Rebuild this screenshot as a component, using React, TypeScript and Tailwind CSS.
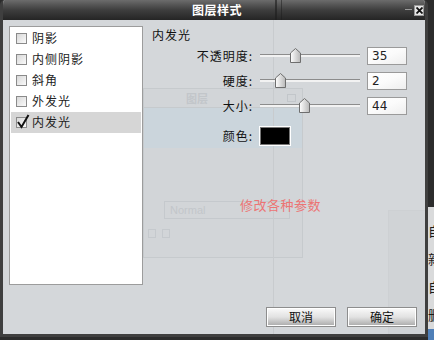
import React from 'react';

const cjk = { fontFamily: '"Noto Sans CJK SC", "Liberation Sans", sans-serif' };

const Checkbox = ({ checked }: { checked?: boolean }) => (
  <span className="relative w-[11px] h-[11px] border border-[#8a8a8a] bg-gradient-to-br from-[#d8d8d8] to-[#fafafa] shrink-0">
    {checked && (
      <svg className="absolute -left-[1px] -top-[4px]" width="14" height="15" viewBox="0 0 14 15">
        <path d="M2 8 L5.5 13 L12.5 1" fill="none" stroke="#111" strokeWidth="2" />
      </svg>
    )}
  </span>
);

const Thumb = () => (
  <svg width="11" height="15" viewBox="0 0 11 15">
    <defs>
      <linearGradient id="tg" x1="0" x2="1" y1="0" y2="0">
        <stop offset="0" stopColor="#ffffff" />
        <stop offset="1" stopColor="#b8b8b8" />
      </linearGradient>
    </defs>
    <path d="M5.5 0.5 L10.5 5 L10.5 14.5 L0.5 14.5 L0.5 5 Z" fill="url(#tg)" stroke="#6e6e6e" />
  </svg>
);

const SliderRow = ({ label, pos, value }: { label: string; pos: number; value: string }) => (
  <div className="flex items-center h-[17px]">
    <div className="w-[101px] text-right text-[12px] text-[#111] tracking-[1px]" style={cjk}>{label}</div>
    <div className="relative ml-[7px] w-[100px] h-[17px] flex items-center">
      <div className="w-full h-[3px] border-t border-[#8c8c8c] bg-[#f2f2f2]" />
      <div className="absolute top-[1px]" style={{ left: pos - 5 }}>
        <Thumb />
      </div>
    </div>
    <div
      className="ml-[7px] w-[40px] h-[18px] bg-gradient-to-br from-white via-[#fbfbfb] to-[#eeeeee] border border-[#9a9a9a] pl-[4px] flex items-center text-[12px] text-[#222]"
      style={{ fontFamily: '"DejaVu Sans", sans-serif' }}
    >
      {value}
    </div>
  </div>
);

const DialogButton = ({ text }: { text: string }) => (
  <button
    className="w-[70px] h-[20px] border border-[#8d8d8d] bg-gradient-to-b from-[#fafafa] via-[#e2e2e2] to-[#a9a9a9] shadow-[inset_0_0_0_1px_#ffffff] text-[12px] text-[#111] flex items-center justify-center"
    style={cjk}
  >
    {text}
  </button>
);

export default function App() {
  const items = ['阴影', '内侧阴影', '斜角', '外发光', '内发光'];
  return (
    <div className="relative w-[434px] h-[340px] bg-[#2c2c2c] overflow-hidden" style={cjk}>
      {/* background app peeking at right edge */}
      <div className="absolute left-[428px] top-[207px] w-[6px] h-[122px] bg-[#d9dadb]" />
      <div className="absolute left-[428px] top-[329px] w-[6px] h-[11px] bg-[#4f7fb8]" />
      <div className="absolute left-[428px] top-[224px] flex flex-col gap-[15px] text-[13px] text-[#1a1a1a] leading-[13px]">
        <span>自</span>
        <span>新</span>
        <span>自</span>
        <span>删</span>
      </div>

      {/* dialog */}
      <div className="absolute left-0 top-0 w-[428px] h-[337px] flex flex-col rounded-t-[5px] border-x-[3px] border-b-[3px] border-[#3f3f3f] bg-[#d4d7da] overflow-hidden">
        <div className="relative h-[20px] shrink-0 bg-gradient-to-b from-[#6c6c6c] via-[#3e3e3e] to-[#252525] flex items-center justify-center">
          <span className="ml-[6px] text-[12px] font-bold text-white tracking-[0.5px]">图层样式</span>
          <div className="absolute left-[272px] top-0 w-[2px] h-full bg-[#1c1c1c]/60" />
          <div className="absolute left-[278px] top-0 w-[1px] h-full bg-[#1c1c1c]/50" />
          <div className="absolute right-[13px] top-[9px] w-[7px] h-[1px] bg-[#9a9a9a]" />
          <div className="absolute right-[1px] top-[5px] w-[10px] h-[11px] bg-[#e6e6e6] border border-[#999] flex items-center justify-center">
            <svg width="7" height="7" viewBox="0 0 7 7">
              <path d="M0.5 0.5 L6.5 6.5 M6.5 0.5 L0.5 6.5" stroke="#111" strokeWidth="1.8" />
            </svg>
          </div>
        </div>

        <div className="relative flex-1 flex pl-[6px] pt-[6px]">
          {/* ghost layers panel seen through the dialog */}
          <div className="absolute left-[140px] top-[68px] w-[160px] h-[170px] border border-[#c6cacd] bg-[#d0d4d7]/60">
            <div className="h-[19px] flex items-center justify-between px-[6px] border-b border-[#c6cacd]">
              <span className="ml-[36px] text-[11px] font-bold text-[#c2c6ca]">图层</span>
              <span className="w-[9px] h-[8px] border border-[#c2c6ca]" />
            </div>
            <div className="h-[40px] bg-[#c9d4dd]/80" />
            <div className="mt-[53px] ml-[20px] w-[126px] h-[18px] border border-[#c5c9cd] flex items-center pl-[5px] text-[11px] text-[#c2c6ca]" style={{ fontFamily: '"Liberation Sans", sans-serif' }}>
              Normal
            </div>
            <div className="mt-[10px] flex gap-[6px] pl-[4px]">
              <span className="w-[8px] h-[9px] border border-[#c5c9cd]" />
              <span className="w-[8px] h-[9px] border border-[#c5c9cd]" />
            </div>
          </div>
          <div className="absolute left-[270px] top-0 w-[1px] h-full bg-[#c8cbce]" />
          <div className="absolute left-[385px] top-[190px] w-[40px] h-[127px] border-l border-t border-[#cdd0d3] bg-[#d0d3d6]" />

          {/* effect list */}
          <div className="relative w-[134px] h-[259px] shrink-0 bg-white border border-[#9c9c9c] pt-[1px] px-[1px]">
            {items.map((t, i) => (
              <div
                key={t}
                className={`flex items-center gap-[5px] h-[21px] pl-[5px] ${i === 4 ? 'bg-[#d6d6d6]' : ''}`}
              >
                <Checkbox checked={i === 4} />
                <span className="-mt-[1px] text-[12px] text-[#222] tracking-[1px]">{t}</span>
              </div>
            ))}
          </div>

          {/* options */}
          <div className="relative ml-[9px] flex flex-col">
            <div className="mt-[1px] h-[16px] flex items-center text-[12px] text-[#111] tracking-[1px]">内发光</div>
            <div className="mt-[4px] flex flex-col gap-[8px]">
              <SliderRow label="不透明度:" pos={35} value="35" />
              <SliderRow label="硬度:" pos={20} value="2" />
              <SliderRow label="大小:" pos={44} value="44" />
            </div>
            <div className="mt-[13px] flex items-center">
              <div className="w-[101px] text-right text-[12px] text-[#111] tracking-[1px]">颜色:</div>
              <div className="ml-[7px] w-[30px] h-[18px] bg-black border border-[#777] shadow-[0_0_0_1px_#ffffff]" />
            </div>
          </div>

          <div className="absolute left-[237px] top-[175px] text-[13px] text-[#ec7474] tracking-[0.5px]">修改各种参数</div>

          <div className="absolute right-[8px] bottom-[7px] flex gap-[11px]">
            <DialogButton text="取消" />
            <DialogButton text="确定" />
          </div>
        </div>
      </div>
    </div>
  );
}
